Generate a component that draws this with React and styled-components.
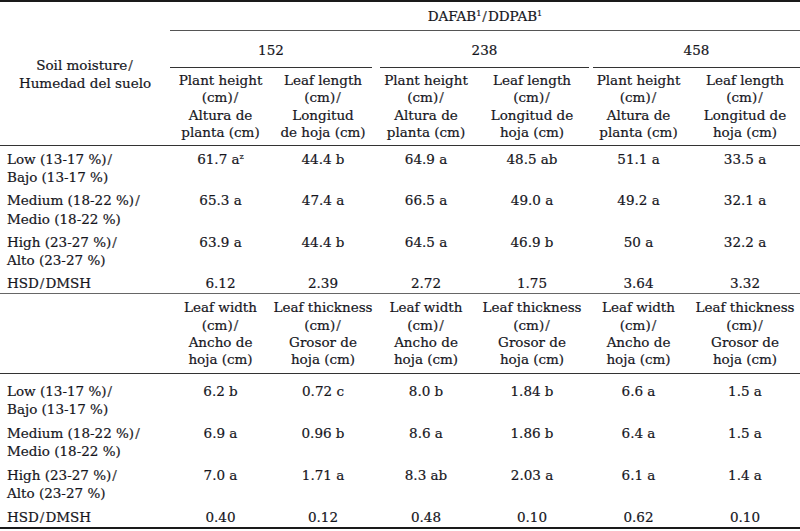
import React from 'react';
import styled, { createGlobalStyle } from 'styled-components';

const Global = createGlobalStyle`
  html, body { margin: 0; padding: 0; background: #fff; }
  body {
    font-family: "DejaVu Serif", "Liberation Serif", serif;
    color: #16161d;
    -webkit-text-stroke: 0.2px #16161d;
  }
`;

const Table = styled.table`
  width: 800px;
  border-collapse: collapse;
  table-layout: fixed;
  font-size: 13.5px;
  border-top: 2px solid #1a1a1a;
  border-bottom: 2px solid #1a1a1a;
`;

const TitleCell = styled.th`
  font-weight: normal;
  text-align: center;
  line-height: 17.5px;
  padding: 6px 0 4px;
  border-bottom: 1px solid #555;
`;

const StubHead = styled.th`
  font-weight: normal;
  text-align: center;
  vertical-align: middle;
  line-height: 18px;
  padding: 2px 0 0;
  border-bottom: 1px solid #333;
`;

const GroupCell = styled.th`
  font-weight: normal;
  padding: 0;
`;

const GroupLabel = styled.div`
  margin: 0 ${(p) => p.$right}px 0 ${(p) => p.$left}px;
  padding: 11px 0 8px;
  line-height: 17.5px;
  text-align: center;
  border-bottom: 1px solid #333;
`;

const HeadRow = styled.tr`
  border-top: ${(p) => (p.$ruled ? '1px solid #666' : 'none')};
  border-bottom: 1px solid #333;
`;

const ColHead = styled.th`
  font-weight: normal;
  text-align: center;
  vertical-align: top;
  white-space: nowrap;
  line-height: 17.4px;
  padding: ${(p) => p.$top}px 0 ${(p) => p.$bottom}px;
`;

const LabelCell = styled.td`
  text-align: left;
  vertical-align: top;
  white-space: nowrap;
  line-height: 18.5px;
  padding: ${(p) => p.$top}px 0 ${(p) => p.$bottom}px 7px;
`;

const ValueCell = styled.td`
  text-align: center;
  vertical-align: top;
  white-space: nowrap;
  line-height: 18.5px;
  padding: ${(p) => p.$top}px 0 ${(p) => p.$bottom}px;
`;

const Sup = styled.sup`
  font-size: 0.6em;
  line-height: 0;
  vertical-align: 0.65em;
`;

const Slash = styled.span`
  padding: 0 1px;
  color: #444;
`;

const S = () => <Slash>/</Slash>;

const Lines = ({ parts }) =>
  parts.map((p, i) => (
    <React.Fragment key={i}>
      {i > 0 && <br />}
      {p}
    </React.Fragment>
  ));

const head1 = [
  ['Plant height', <>(cm)<S /></>, 'Altura de', 'planta (cm)'],
  ['Leaf length', <>(cm)<S /></>, 'Longitud', 'de hoja (cm)'],
  ['Plant height', <>(cm)<S /></>, 'Altura de', 'planta (cm)'],
  ['Leaf length', <>(cm)<S /></>, 'Longitud de', 'hoja (cm)'],
  ['Plant height', <>(cm)<S /></>, 'Altura de', 'planta (cm)'],
  ['Leaf length', <>(cm)<S /></>, 'Longitud de', 'hoja (cm)'],
];

const head2 = [
  ['Leaf width', <>(cm)<S /></>, 'Ancho de', 'hoja (cm)'],
  ['Leaf thickness', <>(cm)<S /></>, 'Grosor de', 'hoja (cm)'],
  ['Leaf width', <>(cm)<S /></>, 'Ancho de', 'hoja (cm)'],
  ['Leaf thickness', <>(cm)<S /></>, 'Grosor de', 'hoja (cm)'],
  ['Leaf width', <>(cm)<S /></>, 'Ancho de', 'hoja (cm)'],
  ['Leaf thickness', <>(cm)<S /></>, 'Grosor de', 'hoja (cm)'],
];

const levels = [
  [<>Low (13-17 %)<S /></>, 'Bajo (13-17 %)'],
  [<>Medium (18-22 %)<S /></>, 'Medio (18-22 %)'],
  [<>High (23-27 %)<S /></>, 'Alto (23-27 %)'],
];

const data1 = [
  [<>61.7 a<Sup>z</Sup></>, '44.4 b', '64.9 a', '48.5 ab', '51.1 a', '33.5 a'],
  ['65.3 a', '47.4 a', '66.5 a', '49.0 a', '49.2 a', '32.1 a'],
  ['63.9 a', '44.4 b', '64.5 a', '46.9 b', '50 a', '32.2 a'],
];
const hsd1 = ['6.12', '2.39', '2.72', '1.75', '3.64', '3.32'];

const data2 = [
  ['6.2 b', '0.72 c', '8.0 b', '1.84 b', '6.6 a', '1.5 a'],
  ['6.9 a', '0.96 b', '8.6 a', '1.86 b', '6.4 a', '1.5 a'],
  ['7.0 a', '1.71 a', '8.3 ab', '2.03 a', '6.1 a', '1.4 a'],
];
const hsd2 = ['0.40', '0.12', '0.48', '0.10', '0.62', '0.10'];

const Body = ({ data, hsd, firstTop, bottom }) => (
  <>
    {data.map((row, r) => {
      const top = r === 0 ? firstTop : 4;
      return (
        <tr key={r}>
          <LabelCell $top={top} $bottom={bottom}>
            <Lines parts={levels[r]} />
          </LabelCell>
          {row.map((v, c) => (
            <ValueCell key={c} $top={top} $bottom={bottom}>
              {v}
            </ValueCell>
          ))}
        </tr>
      );
    })}
    <tr>
      <LabelCell $top={4} $bottom={bottom}>
        HSD<S />DMSH
      </LabelCell>
      {hsd.map((v, c) => (
        <ValueCell key={c} $top={4} $bottom={bottom}>
          {v}
        </ValueCell>
      ))}
    </tr>
  </>
);

export default function App() {
  return (
    <>
      <Global />
      <Table>
        <colgroup>
          <col style={{ width: 170 }} />
          <col style={{ width: 101 }} />
          <col style={{ width: 104 }} />
          <col style={{ width: 102 }} />
          <col style={{ width: 110 }} />
          <col style={{ width: 103 }} />
          <col style={{ width: 110 }} />
        </colgroup>
        <thead>
          <tr>
            <StubHead rowSpan={3}>
              Soil moisture<S />
              <br />
              Humedad del suelo
            </StubHead>
            <TitleCell colSpan={6}>
              DAFAB<Sup>1</Sup>
              <S />
              DDPAB<Sup>1</Sup>
            </TitleCell>
          </tr>
          <tr>
            <GroupCell colSpan={2}>
              <GroupLabel $left={0} $right={3}>152</GroupLabel>
            </GroupCell>
            <GroupCell colSpan={2}>
              <GroupLabel $left={5} $right={-2}>238</GroupLabel>
            </GroupCell>
            <GroupCell colSpan={2}>
              <GroupLabel $left={6} $right={0}>458</GroupLabel>
            </GroupCell>
          </tr>
          <HeadRow>
            {head1.map((h, i) => (
              <ColHead key={i} $top={4} $bottom={3}>
                <Lines parts={h} />
              </ColHead>
            ))}
          </HeadRow>
        </thead>
        <tbody>
          <Body data={data1} hsd={hsd1} firstTop={4} bottom={0.5} />
          <HeadRow $ruled>
            <ColHead $top={5} $bottom={4} />
            {head2.map((h, i) => (
              <ColHead key={i} $top={5} $bottom={4}>
                <Lines parts={h} />
              </ColHead>
            ))}
          </HeadRow>
          <Body data={data2} hsd={hsd2} firstTop={8} bottom={1} />
        </tbody>
      </Table>
    </>
  );
}
